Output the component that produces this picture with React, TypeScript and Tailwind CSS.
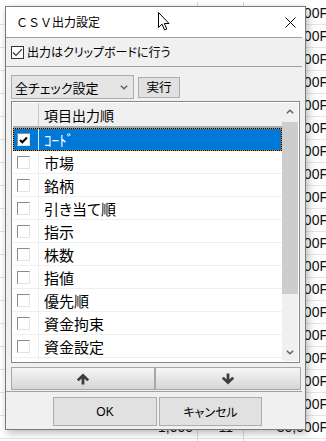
import React from 'react';

const ITEMS = ['ｺｰﾄﾞ', '市場', '銘柄', '引き当て順', '指示', '株数', '指値', '優先順', '資金拘束', '資金設定', '入金区分'];

const SHEET_ROWS = Array.from({ length: 20 }, (_, i) => ({
  qty: '1,000',
  count: '11',
  amount: i % 3 === 0 ? '30,000F' : '10,000F',
}));

const ClassicBox = ({ checked }: { checked?: boolean }) => (
  <div className="w-[13px] h-[13px] bg-white border border-t-[#8a8a8a] border-l-[#8a8a8a] border-r-[#e3e3e3] border-b-[#e3e3e3] flex items-center justify-center">
    {checked && (
      <svg width="9" height="8" viewBox="0 0 9 8">
        <path d="M1 4 L3.3 6.3 L8 1.5" fill="none" stroke="#000" strokeWidth="2" />
      </svg>
    )}
  </div>
);

const Chevron = ({ up }: { up?: boolean }) => (
  <svg width="8" height="5" viewBox="0 0 8 5">
    <path d={up ? 'M0.8 4.3 L4 1.2 L7.2 4.3' : 'M0.8 0.7 L4 3.8 L7.2 0.7'} fill="none" stroke="#606060" strokeWidth="1.4" />
  </svg>
);

const BigArrow = ({ up }: { up?: boolean }) => (
  <svg width="14" height="12" viewBox="0 0 14 12">
    <path
      d="M7 0.5 L0.8 6.5 L2.8 8.3 L5.6 5.6 L5.6 11.5 L8.4 11.5 L8.4 5.6 L11.2 8.3 L13.2 6.5 Z"
      fill="#3c3c3c"
      transform={up ? undefined : 'rotate(180 7 6)'}
    />
  </svg>
);

export default function App() {
  return (
    <div className="relative w-[326px] h-[441px] overflow-hidden bg-white">
      {/* spreadsheet behind the dialog */}
      <div className="pt-[2px] font-['Liberation_Sans',Arial,sans-serif] text-[14px] text-[#111]">
        {SHEET_ROWS.map((r, i) => (
          <div key={i} className="flex w-[340px] h-[23px] border-b border-[#e4e4e4]">
            <div className="w-[120px]" />
            <div className="w-[77px] flex items-center justify-end pr-[4px]">{r.qty}</div>
            <div className="w-[46px] border-l border-[#dadada] flex items-center justify-end pr-[10px]">{r.count}</div>
            <div className="flex-1 border-l border-[#dadada] flex items-center justify-end pr-[12px]">{r.amount}</div>
          </div>
        ))}
      </div>

      {/* dialog */}
      <div className="absolute left-[5px] top-[6px] w-[301px] h-[424px] border border-[#7a7a7a] bg-[#f0f0f0] shadow-[2px_3px_8px_rgba(0,0,0,0.28)] flex flex-col font-['Noto_Sans_CJK_JP',sans-serif] font-normal [font-feature-settings:'palt'] text-black">
        <div className="h-[30px] bg-white flex items-center justify-between pl-[10px] pr-[9px]">
          <span className="text-[12px] leading-none [font-feature-settings:normal]">ＣＳＶ出力設定</span>
          <svg width="11" height="11" viewBox="0 0 11 11">
            <path d="M0.5 0.5 L10.5 10.5 M10.5 0.5 L0.5 10.5" stroke="#000" strokeWidth="1" />
          </svg>
        </div>
        <div className="h-px bg-[#a0a0a0] mr-[3px]" />

        <div className="h-[28px] flex items-center pl-[5px] gap-[3px]">
          <div className="w-[13px] h-[13px] border border-[#333] bg-white flex items-center justify-center">
            <svg width="11" height="9" viewBox="0 0 11 9">
              <path d="M1 4.5 L4 7.5 L10 1.2" fill="none" stroke="#333" strokeWidth="1.2" />
            </svg>
          </div>
          <span className="text-[12px] leading-none">出力はクリップボードに行う</span>
        </div>
        <div className="h-px bg-[#a0a0a0] mr-[3px]" />

        <div className="mt-[8px] h-[24px] flex items-center pl-[5px] gap-[4px]">
          <div className="w-[123px] h-[24px] bg-[#e5e5e5] border border-[#adadad] flex items-center justify-between pl-[3px] pr-[5px]">
            <span className="text-[13px] leading-none">全チェック設定</span>
            <Chevron />
          </div>
          <div className="w-[42px] h-[21px] bg-[#e1e1e1] border border-[#adadad] flex items-center justify-center text-[12.5px] leading-none">
            実行
          </div>
        </div>

        {/* list view */}
        <div className="mt-[2px] ml-[5px] w-[289px] h-[262px] border border-[#828790] p-px bg-white flex">
          <div className="w-[269px] flex flex-col overflow-hidden">
            <div className="h-[25px] shrink-0 flex bg-[#f0f0f0] border-b-2 border-[#a9a9a9]">
              <div className="w-[26px] border-r border-[#c8c8c8]" />
              <div className="flex items-center pl-[5px] text-[14px] leading-none">項目出力順</div>
            </div>
            {ITEMS.map((label, i) =>
              i === 0 ? (
                <div key={label} className="h-[23px] shrink-0 border border-dotted border-black bg-[#f0902a]">
                  <div className="h-full flex bg-[#0078d7]">
                    <div className="w-[25px] flex items-center pl-[3px] border-r border-[#e8e8e8]">
                      <ClassicBox checked />
                    </div>
                    <div className="flex items-center pl-[5px] text-[15px] leading-none text-white">{label}</div>
                  </div>
                </div>
              ) : (
                <div key={label} className="h-[23px] shrink-0 flex border-b border-[#efefef]">
                  <div className="w-[26px] flex items-center pl-[4px] border-r border-[#efefef]">
                    <ClassicBox />
                  </div>
                  <div className="flex items-center pl-[5px] text-[15px] leading-none">{label}</div>
                </div>
              )
            )}
          </div>

          <div className="w-[16px] bg-[#f0f0f0] flex flex-col">
            <div className="h-[17px] flex items-center justify-center">
              <Chevron up />
            </div>
            <div className="mt-[2px] h-[172px] bg-[#cdcdcd]" />
            <div className="flex-1" />
            <div className="h-[17px] flex items-center justify-center">
              <Chevron />
            </div>
          </div>
        </div>

        <div className="mt-[4px] ml-[5px] flex">
          <div className="w-[144px] h-[23px] border border-[#a8a8a8] bg-gradient-to-b from-[#f6f6f6] to-[#d6d6d6] flex items-center justify-center">
            <BigArrow up />
          </div>
          <div className="w-[146px] h-[23px] border border-[#a8a8a8] bg-gradient-to-b from-[#f6f6f6] to-[#d6d6d6] flex items-center justify-center">
            <BigArrow />
          </div>
        </div>
        <div className="mt-[1px] h-px bg-[#a0a0a0] mr-[3px]" />

        <div className="mt-[5px] flex pl-[47px] gap-[2px]">
          <div className="w-[104px] h-[29px] bg-[#e1e1e1] border border-[#adadad] flex items-center justify-center text-[12px] leading-none font-['Liberation_Sans','Noto_Sans_CJK_JP',sans-serif]">
            OK
          </div>
          <div className="w-[103px] h-[29px] bg-[#e1e1e1] border border-[#adadad] flex items-center justify-center text-[12px] leading-none">
            キャンセル
          </div>
        </div>
      </div>

      {/* mouse pointer */}
      <svg className="absolute left-[158px] top-[12px]" width="13" height="19" viewBox="0 0 13 19">
        <path d="M0.5 0.5 L0.5 15.5 L4 12.2 L6.6 18 L8.8 17 L6.3 11.5 L11 11.5 Z" fill="#fff" stroke="#000" strokeWidth="1" strokeLinejoin="miter" />
      </svg>
    </div>
  );
}
